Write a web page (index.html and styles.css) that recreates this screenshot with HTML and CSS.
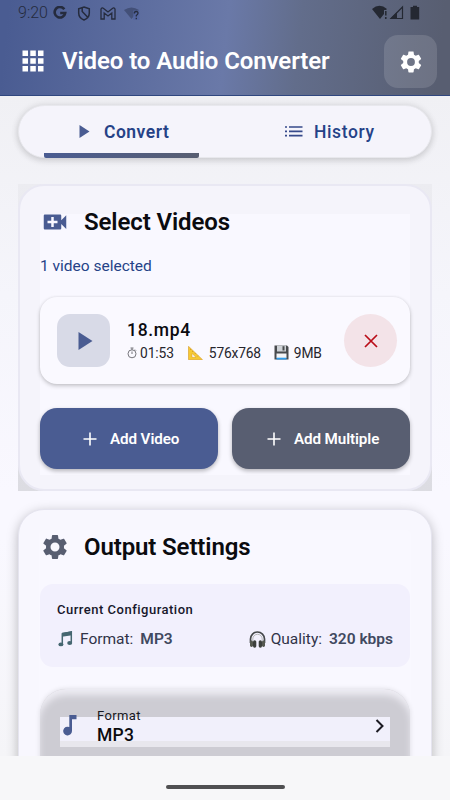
FILE: index.html
```html
<!DOCTYPE html>
<html lang="en">
<head>
<meta charset="utf-8">
<title>Video to Audio Converter</title>
<link rel="stylesheet" href="styles.css">
</head>
<body>
<div class="screen">
  <header class="header">
    <div class="status">
      <div class="status-left">
        <span class="clock">9:20</span>
        <svg class="s-google" width="14" height="14" viewBox="0 0 14 14"><path d="M11.3 3.2A5.3 5.3 0 1 0 12.2 7H7.2" fill="none" stroke="#252b3d" stroke-width="2.6"/></svg>
        <svg class="s-shield" width="14" height="15" viewBox="0 0 14 15"><path d="M7 1L12.3 2.8V7C12.3 10.4 10 12.8 7 14C4 12.8 1.7 10.4 1.7 7V2.8ZM5.200 2V5.500L10.500 11" fill="none" stroke="#252b3d" stroke-width="1.5"/></svg>
        <svg class="s-mail" width="16" height="13" viewBox="0 0 16 13"><path d="M1 12V2Q2 .2 3.6 1.5L8 5L12.4 1.5Q14 .2 15 2V12H11.8V6L8 9L4.2 6V12Z" fill="none" stroke="#252b3d" stroke-width="1.3"/></svg>
        <svg class="s-wifi" width="16" height="13" viewBox="0 0 16 13"><path d="M0 3Q7.500-2 15 3L7.500 12Z" fill="#435078"/><path d="M9.200 3.500H15.500V13H9.200Z" fill="#5665 98"/><path d="M10.300 6.500Q10.300 4.500 12.200 4.500T14 6.300Q14 7.300 12.300 8.500V9.600M12.300 10.800V12.200" fill="none" stroke="#252b3d" stroke-width="1.300"/></svg>
      </div>
      <div class="status-right">
        <svg width="50" height="16" viewBox="0 0 50 16"><path d="M0 4Q7.500-2.500 15 4L14 5H12V9L8 14Z" fill="#242832"/><path d="M13.800 6V10.500M13.800 12V14" stroke="#242832" stroke-width="1.500"/><path d="M30.500 2V13.500H19Z" fill="none" stroke="#242832" stroke-width="1.200"/><path d="M25 7V14H18Z" fill="#242832"/><path d="M39 2H41V.7H45V2H47.200V14.500H38.500V2Z" fill="#242832"/></svg>
      </div>
    </div>
    <div class="appbar">
      <svg class="apps" width="22" height="22" viewBox="0 0 22 22" fill="#fff"><path d="M.5.500h5.500V6H.500zM8.300.500h5.500V6H8.300zM16 .500h5.500V6H16zM.500 8.200h5.500v5.500H.500zM8.300 8.200h5.500v5.500H8.300zM16 8.200h5.500v5.500H16zM.500 16h5.500v5.500H.500zM8.300 16h5.500v5.500H8.300zM16 16h5.500v5.500H16z"/></svg>
      <h1 class="title">Video to Audio Converter</h1>
      <div class="settings">
        <svg width="26" height="26" viewBox="0 0 24 24" fill="#fff"><path d="M19.140 12.940c.04-.3.060-.61.060-.94s-.02-.64-.07-.94l2.030-1.580c.18-.14.230-.41.120-.61l-1.920-3.320c-.12-.22-.37-.29-.59-.22l-2.390.96c-.5-.38-1.030-.7-1.620-.94l-.36-2.540c-.04-.24-.24-.41-.48-.41h-3.840c-.24 0-.43.170-.47.410l-.36 2.540c-.59.240-1.130.570-1.620.940l-2.390-.96c-.22-.08-.47 0-.59.220L2.740 8.870c-.12.210-.08.470.120.610l2.030 1.580c-.05.300-.09.630-.09.940s.02.640.07.940l-2.030 1.580c-.18.140-.23.410-.12.610l1.920 3.320c.12.220.370.290.590.220l2.390-.96c.5.380 1.030.7 1.620.940l.36 2.540c.05.240.240.410.480.410h3.840c.24 0 .44-.17.470-.41l.36-2.540c.59-.24 1.130-.56 1.620-.94l2.390.96c.22.080.470 0 .59-.22l1.920-3.320c.12-.22.070-.47-.12-.61zM12 15.600A3.600 3.600 0 1 1 12 8.400a3.600 3.600 0 0 1 0 7.200z"/></svg>
      </div>
    </div>
  </header>

  <main class="content">
    <nav class="tabs">
      <div class="tab tab-active">
        <svg width="11" height="13" viewBox="0 0 11 13"><path d="M.5 0L10.500 6.500L.5 13Z" fill="#4a5c92"/></svg>
        <span class="tab-label convert">Convert</span>
      </div>
      <div class="tab tab-history">
        <svg width="18" height="11" viewBox="0 0 18 11"><path d="M0 1H2M4 1H17.500M0 5.300H2M4 5.300H17.500M0 9.600H2M4 9.600H17.500" stroke="#36498a" stroke-width="1.700"/></svg>
        <span class="tab-label history">History</span>
      </div>
    </nav>

    <div class="card-frame">
      <section class="card card-videos">
        <div class="card-head">
          <svg width="30" height="30" viewBox="0 0 24 24"><path d="M17 10.500V7c0-.55-.45-1-1-1H4c-.55 0-1 .45-1 1v10c0 .55.450 1 1 1h12c.55 0 1-.45 1-1v-3.500l4 4v-11l-4 4zM14 13h-3v3H9v-3H6v-2h3V8h2v3h3v2z" fill="#4a5c92"/></svg>
          <h2>Select Videos</h2>
        </div>
        <p class="selected">1 video selected</p>
        <div class="item">
          <div class="thumb"><svg width="15" height="18" viewBox="0 0 15 18"><path d="M.5 0L14.500 9L.5 18Z" fill="#4a5c92"/></svg></div>
          <div class="info">
            <div class="name">18.mp4</div>
            <div class="meta">
              <span class="meta-part"><svg class="ic-timer" width="10" height="12" viewBox="0 0 10 12" fill="none" stroke="#77777d"><circle cx="5" cy="6.800" r="4"/><path d="M3.500 1H6.500M5 1V3M5 4.500V7M8 2.600L9 3.600"/></svg><span class="time">01:53</span></span>
              <span class="meta-part size"><svg width="15" height="14" viewBox="0 0 15 14"><path d="M.5 .3L14.500 13.700H.500Z" fill="#f6c934" stroke="#d79a22" stroke-width=".6"/><path d="M4 7.500L8 11.300H4Z" fill="#fbfaff" stroke="#d79a22" stroke-width=".5"/><path d="M3 3L2.300 3.700M5 5L4.300 5.700M7.500 7.300L6.800 8M10 9.700L9.300 10.400" stroke="#a87418" stroke-width=".6"/></svg><span class="dim">576x768</span></span>
              <span class="meta-part disk"><svg width="15" height="15" viewBox="0 0 15 15"><path d="M.5 .5H13L14.500 2V14.500H.5Z" fill="#484b4e"/><path d="M3 .5H12V6.500H3Z" fill="#cfd3d7"/><path d="M8.500 1.200H10.500V5.500H8.500Z" fill="#484b4e"/><path d="M2.500 8.500H12.500V13H2.500Z" fill="#f5f5f7"/><path d="M2.500 12.700H12.500V14.500H2.500Z" fill="#2f9cec"/></svg><span class="mb">9MB</span></span>
            </div>
          </div>
          <div class="remove"><svg width="14" height="14" viewBox="0 0 14 14"><path d="M1 1L13 13M13 1L1 13" stroke="#b90d18" stroke-width="1.700"/></svg></div>
        </div>
        <div class="buttons">
          <div class="btn btn-primary"><svg width="14" height="14" viewBox="0 0 14 14"><path d="M7 .5V13.500M.5 7H13.500" stroke="#fff" stroke-width="1.600"/></svg><span class="b1">Add Video</span></div>
          <div class="btn btn-secondary"><svg width="14" height="14" viewBox="0 0 14 14"><path d="M7 .5V13.500M.5 7H13.500" stroke="#fff" stroke-width="1.600"/></svg><span class="b2">Add Multiple</span></div>
        </div>
      </section>
    </div>

    <section class="card card-output">
      <div class="card-head">
        <svg width="30" height="30" viewBox="0 0 24 24" fill="#585e71"><path d="M19.140 12.940c.04-.3.060-.61.060-.94s-.02-.64-.07-.94l2.030-1.580c.18-.14.230-.41.120-.61l-1.920-3.320c-.12-.22-.37-.29-.59-.22l-2.390.96c-.5-.38-1.030-.7-1.620-.94l-.36-2.540c-.04-.24-.24-.41-.48-.41h-3.840c-.24 0-.43.170-.47.410l-.36 2.540c-.59.240-1.130.570-1.620.940l-2.390-.96c-.22-.08-.47 0-.59.220L2.740 8.870c-.12.210-.08.470.120.610l2.030 1.580c-.05.300-.09.630-.09.940s.02.640.07.940l-2.030 1.580c-.18.140-.23.410-.12.610l1.920 3.320c.12.220.370.290.590.220l2.390-.96c.5.380 1.030.7 1.620.940l.36 2.540c.05.240.240.410.480.410h3.840c.24 0 .44-.17.470-.41l.36-2.540c.59-.24 1.130-.56 1.620-.94l2.390.96c.22.080.470 0 .59-.22l1.920-3.320c.12-.22.070-.47-.12-.61zM12 15.600A3.600 3.600 0 1 1 12 8.400a3.600 3.600 0 0 1 0 7.200z"/></svg>
        <h2 class="h-out">Output Settings</h2>
      </div>
      <div class="config">
        <div class="config-title">Current Configuration</div>
        <div class="config-row">
          <div class="pair"><svg class="ic-notes" width="15" height="16" viewBox="0 0 15 16"><path d="M4.300 13V2.800L13.300 1V11.500" fill="none" stroke="#456670" stroke-width="1.500"/><path d="M4 1.800L14 .3V4.200L4 5.700Z" fill="#456670"/><ellipse cx="2.900" cy="13.400" rx="2.500" ry="1.900" fill="#456670"/><ellipse cx="11.700" cy="12" rx="2.500" ry="1.900" fill="#456670"/></svg><span class="key k1">Format:</span><span class="val v1">MP3</span></div>
          <div class="pair"><svg class="ic-phones" width="17" height="17" viewBox="0 0 17 17"><path d="M1.500 12V8A7 7 0 0 1 15.500 8V12" fill="none" stroke="#45484a" stroke-width="1.700"/><path d="M3.800 9.500V8A4.700 4.700 0 0 1 13.200 8V9.500" fill="none" stroke="#9ea19b" stroke-width=".7"/><rect x="1" y="9.500" width="3" height="6.500" rx="1.400" fill="#55584f"/><rect x="4" y="9.200" width="3.300" height="7.500" rx="1.600" fill="#3d403c"/><rect x="13" y="9.500" width="3" height="6.500" rx="1.400" fill="#55584f"/><rect x="9.700" y="9.200" width="3.300" height="7.500" rx="1.600" fill="#3d403c"/></svg><span class="key k2">Quality:</span><span class="val v2">320 kbps</span></div>
        </div>
      </div>
      <div class="select">
        <div class="select-body">
          <svg class="ic-note" width="14" height="21" viewBox="0 0 14 21"><path d="M6.300 0H13.500V4.300H9V16A4.400 4.400 0 1 1 6.300 12Z" fill="#4a5c92"/></svg>
          <div class="select-text"><div class="lab">Format</div><div class="cur">MP3</div></div>
          <svg class="chev" width="9" height="14" viewBox="0 0 9 14"><path d="M1.500 1L7.500 7L1.500 13" fill="none" stroke="#1c1b22" stroke-width="2"/></svg>
        </div>
      </div>
    </section>
  </main>

  <footer class="navbar"><div class="pill"></div></footer>
</div>
</body>
</html>
```
FILE: styles.css
```css
* { box-sizing: border-box; }
body { margin: 0; font-family: Roboto, "Liberation Sans", sans-serif; color: #0b0b0f; }
svg { display: block; flex: none; }
h1, h2, p { margin: 0; font-weight: 500; }
span, h1, h2, .name, .config-title, .lab, .cur, .selected { white-space: nowrap; }

.screen { width: 450px; height: 800px; overflow: hidden; display: flex; flex-direction: column; background: #f9f8ff; }

.header { height: 96px; flex: none; background: linear-gradient(96deg, #4a5c92 2%, #6a79a8 50%, #626d8b 66%, #585e71 97%); border-bottom: 1px solid #30477f; }
.status { height: 26px; display: flex; justify-content: space-between; }
.status-left { display: flex; align-items: center; padding-left: 18px; color: #252b3d; }
.clock { width: 35px; font-size: 16px; font-weight: 300; line-height: 26px; }
.s-shield { margin-left: 10px; }
.s-mail { margin-left: 9px; }
.s-wifi { margin-left: 8px; }
.s-wifi path:nth-child(2) { fill: #5364a0; fill-opacity: .8; }
.status-right { padding: 5px 28px 0 0; }
.appbar { height: 69px; display: flex; align-items: center; padding: 0 13px 0 22px; }
.appbar > .apps { margin-top: 1px; }
.title { margin-left: 18px; flex: 1; font-size: 24px; font-weight: 600; line-height: 30px; letter-spacing: -.1px; color: #fff; margin-top: 1px; }
.settings { width: 53px; height: 53px; margin-top: 2px; border-radius: 14px; background: rgba(255,255,255,.13); display: flex; align-items: center; justify-content: center; }

.content { height: 660px; flex: none; overflow: hidden; padding: 9px 18px 0; background: linear-gradient(#f0f0f4, #f5f5fb 30%, #f9f8ff 60%, #f9f8ff 67%, #f5f5f8); }

.tabs { height: 53px; display: flex; border-radius: 27px; background: #f5f4fb; border: 1px solid #e8e8ed; box-shadow: 0 2px 7px rgba(0,0,0,.16), 0 0 10px rgba(0,0,0,.05); }
.tab { flex: 1; display: flex; align-items: center; }
.tab-active { margin-left: 25px; flex: 0 0 155px; padding-left: 35px; background: linear-gradient(90deg, #4a5c92, #585e71) bottom / 100% 5px no-repeat; border-radius: 2px; margin-bottom: -1px; padding-bottom: 1px; }
.tab-history { padding-left: 86px; }
.tab-label { font-size: 17.500px; font-weight: 500; color: #254287; }
.convert { margin-left: 14px; font-weight: 600; letter-spacing: .5px; }
.history { margin-left: 11px; letter-spacing: .6px; }

.card-frame { height: 307px; margin-top: 26px; background: linear-gradient(#ececf1, #dcdce2); }
.card { padding: 21px 21px 0; border: 1px solid #e5e4ef; border-radius: 26px; background: #f9f8ff; }
.card-videos { height: 307px; border-width: 2px; border-color: #e9e8f3; padding: 21px 20px 0; background: linear-gradient(#f9f8ff, #f9f8ff) 20px 28px / 370px 261px no-repeat, #f5f4fb; }
.card-head { height: 30px; display: flex; align-items: center; }
.card-head h2 { margin-left: 14px; font-size: 24px; font-weight: 600; line-height: 30px; letter-spacing: -.12px; }
.selected { margin-top: 19px; height: 20px; font-size: 15.500px; line-height: 20px; font-weight: 400; color: #254287; }

.item { height: 87px; margin-top: 21px; padding: 0 13px 0 17px; border-radius: 17px; background: #faf9ff; box-shadow: 0 2px 4px rgba(0,0,0,.2), 0 0 3px rgba(0,0,0,.08); display: flex; align-items: center; }
.thumb { width: 53px; height: 53px; border-radius: 13px; background: #d8dae7; display: flex; align-items: center; justify-content: center; }
.thumb svg { margin-left: 3px; }
.info { flex: 1; margin-left: 17px; }
.name { font-size: 17.500px; font-weight: 500; line-height: 22px; letter-spacing: .7px; }
.meta { height: 20px; margin-top: 2px; display: flex; align-items: center; font-size: 13.800px; color: #26252c; }
.meta-part { display: flex; align-items: center; }
.time { margin-left: 3px; letter-spacing: -.1px; }
.size { margin-left: 14px; }
.dim { margin-left: 6px; letter-spacing: -.2px; }
.disk { margin-left: 13px; }
.mb { margin-left: 5px; letter-spacing: -.2px; }
.remove { width: 53px; height: 53px; border-radius: 50%; background: #f3e3e8; display: flex; align-items: center; justify-content: center; }

.buttons { margin-top: 24px; display: flex; justify-content: space-between; }
.btn { width: 178px; height: 61px; border-radius: 17px; display: flex; align-items: center; color: #fff; font-size: 15.200px; font-weight: 600; letter-spacing: -.1px; box-shadow: 0 2px 4px rgba(0,0,0,.28); }
.btn-primary { background: #4a5c92; padding-left: 43px; }
.btn-secondary { background: #585e71; padding-left: 35px; }
.btn span { margin-left: 13px; }

.card-output { height: 300px; margin-top: 18px; padding-top: 22px; box-shadow: 0 3px 12px rgba(0,0,0,.26), inset 0 0 0 20px #f8f7fe; }
.config { height: 83px; margin-top: 22px; padding: 17px 17px 0; border-radius: 13px; background: #f2f0fd; }
.config-title { font-size: 13px; font-weight: 500; line-height: 17px; letter-spacing: .5px; color: #17172b; }
.config-row { margin-top: 10px; display: flex; justify-content: space-between; }
.pair { height: 22px; display: flex; align-items: center; font-size: 15.500px; color: #303348; }
.ic-notes { margin-left: 1px; }
.key { margin-left: 7px; }
.k2 { margin-left: 5px; }
.val { margin-left: 7px; font-weight: 600; color: #414960; }

.select { height: 100px; margin-top: 22px; padding: 28px 20px 0; border-radius: 26px; background: #cdccd3; box-shadow: inset 0 7px 7px -1px #eeedf4, 0 0 5px rgba(0,0,0,.12); }
.select-body { height: 30px; display: flex; background: linear-gradient(#f1f0fb 24px, #e8e7ed 24px); }
.ic-note { margin: -2px 0 0 3px; }
.select-text { margin: -10px 0 0 20px; flex: 1; }
.lab { font-size: 13px; line-height: 17px; letter-spacing: .4px; color: #17171d; }
.cur { font-size: 17.500px; font-weight: 500; line-height: 22px; letter-spacing: .3px; }
.chev { margin: 2px 6px 0 0; }

.navbar { height: 44px; flex: none; background: #f7f7f9; display: flex; justify-content: center; padding-top: 29px; }
.pill { width: 119px; height: 4px; border-radius: 2px; background: #505052; }
```
